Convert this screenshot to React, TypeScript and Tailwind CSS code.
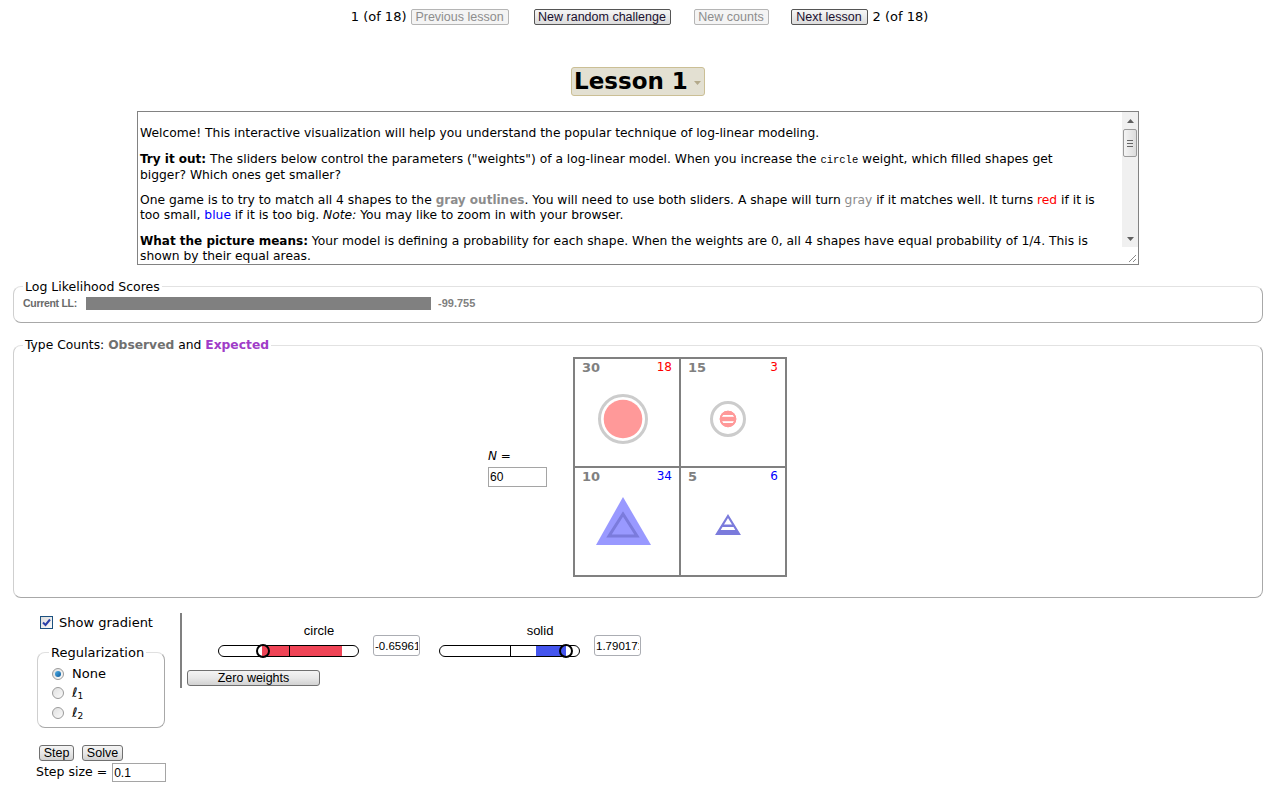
import React from "react";

const sans = "font-['DejaVu_Sans',Verdana,sans-serif]";
const arial = "font-['Liberation_Sans',Arial,sans-serif]";

function TopBtn({ children, disabled, w }: { children: React.ReactNode; disabled?: boolean; w: string }) {
  return (
    <span
      className={
        "inline-flex items-center justify-center h-[16px] rounded-[2px] border text-[12.5px] leading-none " +
        arial +
        " " +
        w +
        " " +
        (disabled
          ? "border-[#b5b5b5] bg-[#f4f4f4] text-[#8d8d8d]"
          : "border-[#555] bg-gradient-to-b from-[#f6f6f6] to-[#dcdcdc] text-[#1a1030]")
      }
    >
      {children}
    </span>
  );
}

function GrayBtn({ children, w }: { children: React.ReactNode; w: string }) {
  return (
    <span
      className={
        "inline-flex items-center justify-center h-[16px] rounded-[3px] border border-[#707070] bg-gradient-to-b from-[#f4f4f4] via-[#e8e8e8] to-[#d2d2d2] text-[12.5px] leading-none text-black " +
        arial +
        " " +
        w
      }
    >
      {children}
    </span>
  );
}

function Radio({ checked }: { checked?: boolean }) {
  return (
    <span className="relative inline-flex items-center justify-center w-[12px] h-[12px] rounded-full border border-[#9a9a9a] bg-gradient-to-br from-[#e0e0e0] to-[#fafafa]">
      {checked && <span className="w-[6px] h-[6px] rounded-full bg-gradient-to-br from-[#4fb0e8] to-[#0a5a9a]" />}
    </span>
  );
}

function Slider({
  label,
  value,
  fillLeft,
  fillWidth,
  fillColor,
  thumbX,
  thumb,
}: {
  label: string;
  value: string;
  fillLeft: string;
  fillWidth: string;
  fillColor: string;
  thumbX: string;
  thumb: string;
}) {
  return (
    <div className="flex flex-col items-center w-[202px]">
      <div className={"text-[13px] leading-[15px] h-[15px] mt-[10px] " + arial}>{label}</div>
      <div className="flex items-start mt-[-3px] gap-[14px]">
        <div className="relative w-[141px] h-[12px] mt-[10px] rounded-full border border-black bg-white">
          <div className={"absolute top-0 bottom-0 " + fillLeft + " " + fillWidth + " " + fillColor} />
          <div className="absolute top-[-1px] bottom-[-1px] left-[70px] w-[1px] bg-black" />
          <div className={"absolute top-[-2px] w-[14px] h-[14px] rounded-full border-[2.5px] border-black " + thumbX + " " + thumb} />
        </div>
        <input
          readOnly
          value={value}
          className={"w-[47px] h-[21px] rounded-[3px] border border-[#abadb3] px-[1px] text-[11.5px] text-black bg-white outline-none " + arial}
        />
      </div>
    </div>
  );
}

export default function App() {
  return (
    <div className={"w-[1275px] min-h-[787px] bg-white text-black " + sans}>
      {/* top bar */}
      <div className="flex justify-center items-center pt-[8px] h-[25px] text-[13px]">
        <span className="ml-[4px]">1 (of 18)</span>
        <span className="ml-[4px]">
          <TopBtn disabled w="w-[98px]">Previous lesson</TopBtn>
        </span>
        <span className="ml-[25px]">
          <TopBtn w="w-[137px]">New random challenge</TopBtn>
        </span>
        <span className="ml-[23px]">
          <TopBtn disabled w="w-[75px]">New counts</TopBtn>
        </span>
        <span className="ml-[22px]">
          <TopBtn w="w-[77px]">Next lesson</TopBtn>
        </span>
        <span className="ml-[5px]">2 (of 18)</span>
      </div>

      {/* lesson select */}
      <div className="flex justify-center mt-[42px]">
        <div className="ml-[1px] flex items-center w-[134px] h-[29px] rounded-[3px] border border-[#cbbf95] bg-[#e3e0d2]">
          <span className="ml-[2px] text-[23px] font-bold leading-none text-black">Lesson 1</span>
          <svg width="8" height="6" className="ml-[6px] mt-[2px]" viewBox="0 0 8 6">
            <polygon points="0,1 7,1 3.5,5" fill="#b3a98a" />
          </svg>
        </div>
      </div>

      {/* description box */}
      <div className="flex justify-center mt-[15px]">
        <div className="flex ml-[1px] w-[1002px] h-[154px] border border-[#828282] bg-white">
          <div className="flex-1 overflow-hidden pl-[2px] pt-[14px] text-[12.3px] leading-[15px] [&_b]:text-[12px]">
            <p className="mb-[10.5px] whitespace-nowrap">
              Welcome! This interactive visualization will help you understand the popular technique of log-linear modeling.
            </p>
            <p className="mb-[10.5px] whitespace-nowrap">
              <b>Try it out:</b> The sliders below control the parameters ("weights") of a log-linear model. When you increase the{" "}
              <span className="font-['Liberation_Mono',monospace] text-[10.5px]">circle</span> weight, which filled shapes get
              <br />
              bigger? Which ones get smaller?
            </p>
            <p className="mb-[10.5px] whitespace-nowrap">
              One game is to try to match all 4 shapes to the <b className="text-[#8c8c8c]">gray outlines</b>. You will need to use
              both sliders. A shape will turn <span className="text-[#8c8c8c]">gray</span> if it matches well. It turns{" "}
              <span className="text-[#ff0000]">red</span> if it is
              <br />
              too small, <span className="text-[#0000ff]">blue</span> if it is too big. <i>Note:</i> You may like to zoom in with your
              browser.
            </p>
            <p className="mb-[10.5px] whitespace-nowrap">
              <b>What the picture means:</b> Your model is defining a probability for each shape. When the weights are 0, all 4
              shapes have equal probability of 1/4. This is
              <br />
              shown by their equal areas.
            </p>
          </div>
          {/* scrollbar */}
          <div className="flex flex-col w-[16px]">
            <div className="flex-1 flex flex-col bg-[#f0f0f0]">
              <div className="h-[17px] flex items-center justify-center">
                <svg width="7" height="4" viewBox="0 0 7 4">
                  <polygon points="0,4 7,4 3.5,0" fill="#606060" />
                </svg>
              </div>
              <div className="mx-[1px] h-[28px] rounded-[2px] border border-[#9a9a9a] bg-gradient-to-r from-[#f4f4f4] to-[#dcdcdc] flex flex-col items-center justify-center gap-[2px]">
                <span className="w-[6px] h-[1px] bg-[#666]" />
                <span className="w-[6px] h-[1px] bg-[#666]" />
                <span className="w-[6px] h-[1px] bg-[#666]" />
              </div>
              <div className="flex-1" />
              <div className="h-[17px] flex items-center justify-center">
                <svg width="7" height="4" viewBox="0 0 7 4">
                  <polygon points="0,0 7,0 3.5,4" fill="#606060" />
                </svg>
              </div>
            </div>
            <div className="h-[17px] bg-white flex items-end justify-end pr-[1px] pb-[1px]">
              <svg width="9" height="9" viewBox="0 0 9 9">
                <line x1="8" y1="1" x2="1" y2="8" stroke="#8a8a8a" />
                <line x1="8" y1="5" x2="5" y2="8" stroke="#8a8a8a" />
              </svg>
            </div>
          </div>
        </div>
      </div>

      {/* log likelihood */}
      <fieldset className="ml-[13px] mr-[12px] mt-[14px] rounded-[8px] border border-t-[#e2e2e2] border-l-[#cfcfcf] border-r-[#a8a8a8] border-b-[#a8a8a8] pl-[9px] pr-[9px] pb-[12px]">
        <legend className="px-[2px] text-[12.5px] leading-[15px]">Log Likelihood Scores</legend>
        <div className={"flex items-center h-[13px] mt-[3px] font-bold text-[#6a6a6a] " + arial}>
          <span className="w-[63px] text-[10.5px] tracking-[-0.3px]">Current LL:</span>
          <div className="w-[345px] h-[13px] bg-[#808080]" />
          <span className="ml-[7px] text-[11px] text-[#808080]">-99.755</span>
        </div>
      </fieldset>

      {/* type counts */}
      <fieldset className="ml-[13px] mr-[12px] mt-[15px] rounded-[8px] border border-t-[#e2e2e2] border-l-[#cfcfcf] border-r-[#a8a8a8] border-b-[#a8a8a8] pl-[9px] pr-[9px] pb-[20px]">
        <legend className="px-[2px] text-[12.3px] leading-[15px]">
          Type Counts: <b className="text-[#707070]">Observed</b> and <b className="text-[#a03cc8]">Expected</b>
        </legend>
        <div className="flex justify-center items-center mt-[4px] pr-[1px]">
          <div className="flex flex-col mr-[26px] mt-[1px]">
            <div className="text-[12px] leading-[15px]">
              <i>N</i> =
            </div>
            <input
              readOnly
              value="60"
              className={"mt-[3px] w-[59px] h-[20px] border border-[#a5a5a5] px-[1px] text-[12px] bg-white outline-none " + arial}
            />
          </div>
          <div className="grid grid-cols-2 gap-[2px] border-2 border-[#808080] bg-[#808080]">
            {/* cell 1 */}
            <div className="relative w-[104px] h-[107px] bg-white">
              <svg className="absolute inset-0" width="104" height="107" viewBox="0 0 104 107">
                <circle cx="48" cy="60" r="23.5" fill="none" stroke="#cccccc" strokeWidth="3" />
                <circle cx="48" cy="60" r="19.3" fill="#ff9999" />
              </svg>
              <div className="relative flex justify-between px-[7px] pt-[1px] leading-[15px]">
                <span className="text-[13px] font-bold text-[#808080]">30</span>
                <span className="text-[12px] text-[#ff0000]">18</span>
              </div>
            </div>
            {/* cell 2 */}
            <div className="relative w-[104px] h-[107px] bg-white">
              <svg className="absolute inset-0" width="104" height="107" viewBox="0 0 104 107">
                <circle cx="47" cy="60" r="16.5" fill="none" stroke="#cccccc" strokeWidth="3" />
                <circle cx="47" cy="60" r="8.3" fill="#ff9999" />
                <rect x="40" y="56" width="14" height="1.8" fill="#ffffff" />
                <rect x="40" y="62.2" width="14" height="1.8" fill="#ffffff" />
                <circle cx="47" cy="60" r="7.3" fill="none" stroke="#ff9999" strokeWidth="2" />
              </svg>
              <div className="relative flex justify-between px-[7px] pt-[1px] leading-[15px]">
                <span className="text-[13px] font-bold text-[#808080]">15</span>
                <span className="text-[12px] text-[#ff0000]">3</span>
              </div>
            </div>
            {/* cell 3 */}
            <div className="relative w-[104px] h-[107px] bg-white">
              <svg className="absolute inset-0" width="104" height="107" viewBox="0 0 104 107">
                <polygon points="48,29 21,77 76,77" fill="#9999ff" />
                <polygon points="48,46 34,68 62,68" fill="none" stroke="#7b7bdc" strokeWidth="3" strokeLinejoin="miter" />
              </svg>
              <div className="relative flex justify-between px-[7px] pt-[1px] leading-[15px]">
                <span className="text-[13px] font-bold text-[#808080]">10</span>
                <span className="text-[12px] text-[#0000ff]">34</span>
              </div>
            </div>
            {/* cell 4 */}
            <div className="relative w-[104px] h-[107px] bg-white">
              <svg className="absolute inset-0" width="104" height="107" viewBox="0 0 104 107">
                <defs>
                  <clipPath id="tri4">
                    <polygon points="47,47 35,67 59,67" />
                  </clipPath>
                </defs>
                <g clipPath="url(#tri4)">
                  <rect x="30" y="56.5" width="35" height="2.5" fill="#7b7bdc" />
                  <rect x="30" y="62" width="35" height="6" fill="#7b7bdc" />
                </g>
                <polygon points="47,48 36,66 58,66" fill="none" stroke="#7b7bdc" strokeWidth="2.2" />
              </svg>
              <div className="relative flex justify-between px-[7px] pt-[1px] leading-[15px]">
                <span className="text-[13px] font-bold text-[#808080]">5</span>
                <span className="text-[12px] text-[#0000ff]">6</span>
              </div>
            </div>
          </div>
        </div>
      </fieldset>

      {/* bottom controls */}
      <div className="flex pl-[36px] pt-[15px]">
        <div className="w-[131px] flex flex-col">
          <div className="flex items-center ml-[4px] mt-[3px] h-[13px] gap-[6px] text-[13px]">
            <span className="relative w-[13px] h-[13px] border border-[#1c5180] bg-gradient-to-br from-[#dcdcdc] to-[#fbfbfb] flex items-center justify-center">
              <svg width="9" height="9" viewBox="0 0 9 9">
                <polyline points="1,4.5 3.5,7 8,1.5" fill="none" stroke="#2a3fa8" strokeWidth="2" />
              </svg>
            </span>
            <span>Show gradient</span>
          </div>
          <fieldset className="ml-[1px] mt-[16px] w-[128px] rounded-[8px] border border-t-[#e0e0e0] border-l-[#cfcfcf] border-r-[#a8a8a8] border-b-[#a8a8a8] pl-[14px] pb-[4px]">
            <legend className="ml-[-3px] px-[2px] text-[13px] leading-[15px]">Regularization</legend>
            <div className="flex items-center h-[18px] mt-[5px] gap-[8px] text-[13px]">
              <Radio checked />
              <span>None</span>
            </div>
            <div className="flex items-center h-[19px] gap-[8px] text-[13px]">
              <Radio />
              <span>
                ℓ<sub className="text-[9px]">1</sub>
              </span>
            </div>
            <div className="flex items-center h-[21px] gap-[8px] text-[13px]">
              <Radio />
              <span>
                ℓ<sub className="text-[9px]">2</sub>
              </span>
            </div>
          </fieldset>
          <div className="flex ml-[3px] mt-[17px] gap-[8px]">
            <GrayBtn w="w-[35px]">Step</GrayBtn>
            <GrayBtn w="w-[41px]">Solve</GrayBtn>
          </div>
          <div className="flex items-center mt-[2px] text-[12.5px]">
            <span>Step size =</span>
            <input
              readOnly
              value="0.1"
              className={"ml-[5px] w-[54px] h-[19px] border border-[#a5a5a5] px-[1px] text-[12px] bg-white outline-none " + arial}
            />
          </div>
        </div>
        <div className="ml-[13px] h-[75px] border-l-2 border-[#808080] pl-[5px] flex flex-col">
          <div className="flex ml-[31px] gap-[19px]">
            <Slider
              label="circle"
              value="-0.659612"
              fillLeft="left-[43px]"
              fillWidth="w-[80px]"
              fillColor="bg-[#ef4456]"
              thumbX="left-[37px]"
              thumb="bg-[linear-gradient(to_right,white_0%,white_40%,#ef4456_40%,#ef4456_100%)]"
            />
            <Slider
              label="solid"
              value="1.790171"
              fillLeft="left-[96px]"
              fillWidth="w-[31px]"
              fillColor="bg-[#4455ee]"
              thumbX="left-[119px]"
              thumb="bg-[linear-gradient(to_right,#4455ee_0%,#4455ee_50%,white_50%,white_100%)]"
            />
          </div>
          <div className="mt-[8px]">
            <GrayBtn w="w-[133px]">Zero weights</GrayBtn>
          </div>
        </div>
      </div>
    </div>
  );
}
